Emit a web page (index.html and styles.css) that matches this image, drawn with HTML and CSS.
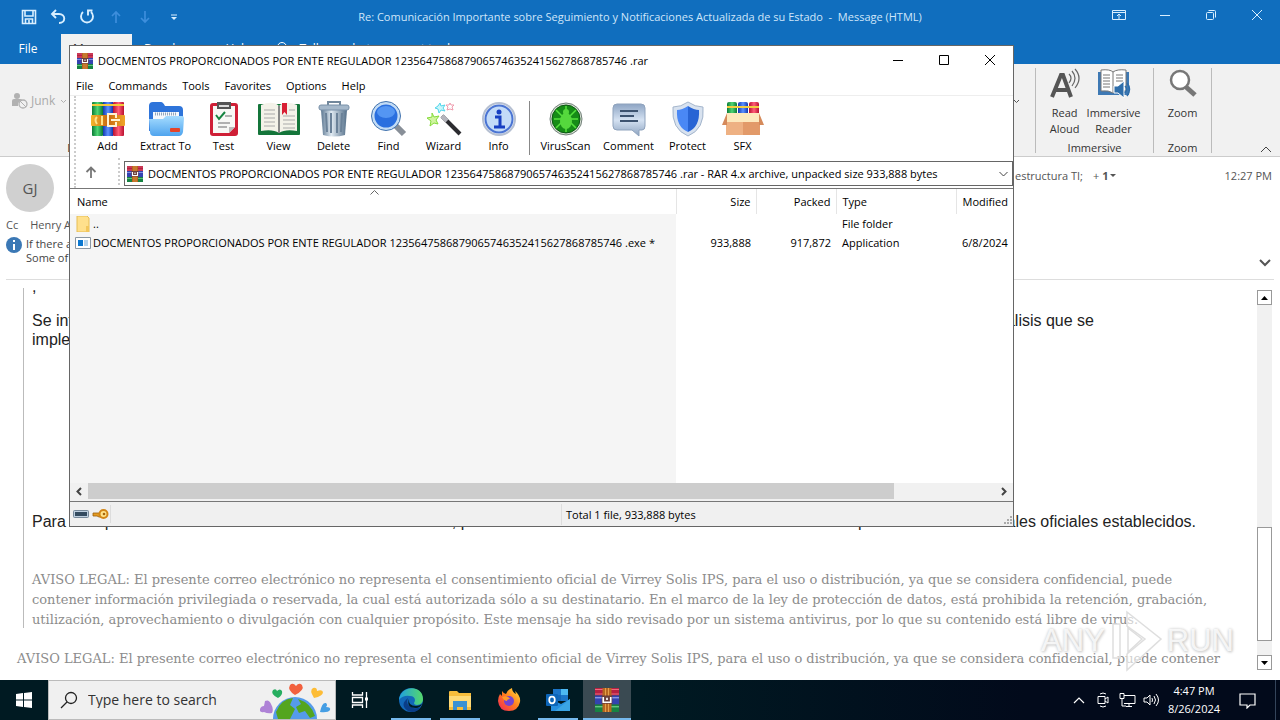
FILE: index.html
```html
<!DOCTYPE html>
<html lang="es">
<head>
<meta charset="utf-8">
<title>Re: Comunicación Importante - Message (HTML)</title>
<link rel="stylesheet" href="styles.css">
</head>
<body>
<svg class="defs" width="0" height="0" aria-hidden="true">
  <defs>
    <linearGradient id="gGold" x1="0" x2="1"><stop offset="0" stop-color="#f5b52d"/><stop offset=".5" stop-color="#c86a10"/><stop offset="1" stop-color="#f0a62a"/></linearGradient>
    <linearGradient id="gRed" x1="0" x2="1"><stop offset="0" stop-color="#b8102f"/><stop offset=".5" stop-color="#ff5d78"/><stop offset="1" stop-color="#b8102f"/></linearGradient>
    <linearGradient id="gBlue" x1="0" x2="1"><stop offset="0" stop-color="#1238b0"/><stop offset=".5" stop-color="#5d92ff"/><stop offset="1" stop-color="#1238b0"/></linearGradient>
    <linearGradient id="gGreen" x1="0" x2="1"><stop offset="0" stop-color="#0a7a35"/><stop offset=".5" stop-color="#4fd675"/><stop offset="1" stop-color="#0a7a35"/></linearGradient>
    <linearGradient id="gSky" x1="0" y1="0" x2="0" y2="1"><stop offset="0" stop-color="#a5dcff"/><stop offset="1" stop-color="#4fa4ee"/></linearGradient>
    <linearGradient id="gSteel" x1="0" x2="1"><stop offset="0" stop-color="#5d7892"/><stop offset=".4" stop-color="#e0eaf2"/><stop offset="1" stop-color="#55708a"/></linearGradient>
    <linearGradient id="gNote" x1="0" y1="0" x2="0" y2="1"><stop offset="0" stop-color="#8ea5c4"/><stop offset=".5" stop-color="#d5e2f2"/><stop offset="1" stop-color="#8da3c0"/></linearGradient>
    <linearGradient id="gEdge" x1="0" y1="0" x2="1" y2="0"><stop offset="0" stop-color="#1fa0e0"/><stop offset="1" stop-color="#55d86a"/></linearGradient>
    <linearGradient id="gFox" x1="1" y1="0" x2="0" y2="1"><stop offset="0" stop-color="#ffe53b"/><stop offset=".5" stop-color="#ff7a1f"/><stop offset="1" stop-color="#f0205a"/></linearGradient>
    <symbol id="books" viewBox="0 0 16 16">
      <rect width="16" height="5" fill="#b52042"/><rect y="5" width="16" height="6" fill="#3343b0"/><rect y="11" width="16" height="5" fill="#168242"/>
      <path d="M0 1h16M0 4h16" stroke="#ee6a7c" stroke-width=".7"/><path d="M0 6.500h16" stroke="#98a4ee" stroke-width=".8"/><path d="M0 12.500h16" stroke="#72cf8b" stroke-width=".8"/>
      <rect x="5" width="6" height="16" fill="#b5651f"/><path d="M7 0v16M9 0v16" stroke="#e6a04a" stroke-width=".7"/>
      <rect x="4.500" y="5" width="7" height="5.500" fill="#6b3f3a"/><path d="M5.500 6v3.500h5V6M8 6.500v1.500" fill="none" stroke="#fff" stroke-width="1.100"/>
    </symbol>
  </defs>
</svg>
<main class="desktop">
  <section class="mail">
    <header class="mail-title">
      <div class="quick">
        <svg width="16" height="16" fill="none" stroke="#d9efff" stroke-width="1.600"><path d="M1.500 1.500h13v13h-13zM4 2v5h8V2M4.500 14v-4h7v4M8 11v3"/></svg>
        <svg width="16" height="16" fill="none" stroke="#d9efff" stroke-width="1.900"><path d="M6 1 2 5l4 4M2 5h7c7 0 7 9 0 9"/></svg>
        <svg width="16" height="16" fill="none" stroke="#d9efff" stroke-width="1.900"><path d="M4 3a6 6 0 1 0 8 0M13.500 1.500H9V6.500"/></svg>
        <svg width="16" height="16" fill="none" stroke="#3d8edc" stroke-width="1.700"><path d="M8 14V3M4 7l4-4 4 4"/></svg>
        <svg width="16" height="16" fill="none" stroke="#3d8edc" stroke-width="1.700"><path d="M8 2v11M4 9l4 4 4-4"/></svg>
        <svg width="16" height="16"><path d="M5 6h6" stroke="#d9efff"/><path d="M5 8h6l-3 3z" fill="#d9efff"/></svg>
      </div>
      <h1>Re: Comunicación Importante sobre Seguimiento y Notificaciones Actualizada de su Estado&nbsp; -&nbsp; Message (HTML)</h1>
      <div class="win-controls">
        <button aria-label="Ribbon options"><svg width="14" height="12" fill="none" stroke="#d9efff"><path d="M.5 1.500h13v9H.5zM1 3.500h12M7 10V5M5 7l2-2 2 2"/></svg></button>
        <button aria-label="Minimize"><svg width="12" height="12" stroke="#d9efff"><path d="M1 6.500h10"/></svg></button>
        <button aria-label="Restore"><svg width="12" height="12" fill="none" stroke="#d9efff"><rect x="1.500" y="3.500" width="7" height="7" rx="1"/><path d="M3.500 1.500h6a1 1 0 0 1 1 1v6"/></svg></button>
        <button aria-label="Close"><svg width="12" height="12" stroke="#d9efff"><path d="m1 1 10 10M11 1 1 11"/></svg></button>
      </div>
    </header>
    <nav class="tabs">
      <button>File</button><button class="on">Message</button><button>Developer</button><button>Help</button>
      <button class="tell"><svg width="14" height="14" fill="none" stroke="#fff"><circle cx="7" cy="5" r="4.500"/><path d="m4 9-3 4"/></svg>Tell me what you want to do</button>
    </nav>
    <div class="ribbon">
      <button class="junk"><svg width="18" height="18" fill="#b1b1b1"><circle cx="6" cy="4" r="3"/><path d="M1 14V9q0-2 2-2h6q2 0 2 1l-4 3v3z"/><circle cx="12" cy="12" r="4" fill="#f1f1f1" stroke="#b1b1b1" stroke-width="1.300"/><path d="m9 9 6 6" stroke="#b1b1b1"/></svg>Junk<svg width="7" height="5" fill="none" stroke="#b1b1b1"><path d="m1 1 2.500 2.500L6 1"/></svg></button>
      <span class="del">Delete</span>
      <div class="groups">
        <svg class="more" width="7" height="5" fill="none" stroke="#555"><path d="m1 1 2.500 2.500L6 1"/></svg>
        <div class="group immersive">
          <div class="tools">
            <button><svg width="32" height="32" fill="none" stroke="#666"><path d="M3 29 12 7h2l8 22M7 22h11" stroke="#555" stroke-width="4"/><path d="M20 6q4 4 0 9M23 3q6 7 0 15M26 1q8 9 0 19" stroke-width="1.200"/></svg>Read<br>Aloud</button>
            <button><svg width="34" height="32" fill="none"><path d="M1 4h31v23H1z" fill="#3e79b4"/><path d="M4 2q9-1 12 2 4-3 13-2v21q-9-1-13 2-4-3-12-2z" fill="#fff" stroke="#777"/><path d="M16 4v20M6 7h7M6 10h7M6 13h7M6 16h7M6 19h7M19 7h7M19 10h7M19 13h7" stroke="#777"/><path d="M17 18h4l6-5v17l-6-5h-4z" fill="#2f6eaa" stroke="#fff"/><path d="M28 18q3 3 0 7M30 15q5 6 0 13" stroke="#2f6eaa" stroke-width="1.500"/></svg>Immersive<br>Reader</button>
          </div>
          <span>Immersive</span>
        </div>
        <div class="group zoom">
          <div class="tools"><button><svg width="32" height="32" fill="#fff" stroke="#777"><path d="m19 19 9 8" stroke-width="5"/><circle cx="13" cy="12" r="9" stroke-width="2.500"/></svg>Zoom</button></div>
          <span>Zoom</span>
        </div>
        <div class="tail"><svg width="12" height="7" fill="none" stroke="#444"><path d="m1 6 5-5 5 5"/></svg></div>
      </div>
    </div>
    <div class="msg-head">
      <div class="who">
        <div class="avatar">GJ</div>
        <p class="cc"><span>Cc</span><span>Henry Al</span></p>
        <div class="info"><svg width="16" height="16"><circle cx="8" cy="8" r="8" fill="#3b78b5"/><path d="M8 7v6M8 3v2" stroke="#fff" stroke-width="2"/></svg><p>If there are<br>Some of t</p></div>
      </div>
      <div class="meta">
        <p class="rcpt">estructura TI; <span>+ <b>1</b></span><svg width="6" height="4"><path d="M0 0h6L3 3z" fill="#555"/></svg></p>
        <time>12:27 PM</time>
      </div>
      <svg class="expand" width="12" height="8" fill="none" stroke="#555" stroke-width="2"><path d="m1 1 5 5 5-5"/></svg>
    </div>
    <div class="reading">
      <article>
        <div class="quote">
          <p class="cut">,</p>
          <p class="para split"><span>Se informa<br>implementan</span><span>álisis que se</span></p>
          <p class="para split second"><span>Para cualquier consulta o solicitud de información adicional, puede comunicarse</span><span>por medio de los canales oficiales establecidos.</span></p>
          <p class="legal"><span>AVISO LEGAL: El presente correo electrónico no representa el consentimiento oficial de Virrey Solis IPS, para el uso o distribución, ya que se considera confidencial, puede</span><span>contener información privilegiada o reservada, la cual está autorizada sólo a su destinatario. En el marco de la ley de protección de datos, está prohibida la retención, grabación,</span><span>utilización, aprovechamiento o divulgación con cualquier propósito. Este mensaje ha sido revisado por un sistema antivirus, por lo que su contenido está libre de virus.</span></p>
        </div>
        <p class="legal last"><span>AVISO LEGAL: El presente correo electrónico no representa el consentimiento oficial de Virrey Solis IPS, para el uso o distribución, ya que se considera confidencial, puede contener</span></p>
      </article>
      <div class="vbar"><button aria-label="Scroll up"><svg width="7" height="4"><path d="M0 4h7L3.500 0z"/></svg></button><i></i><button aria-label="Scroll down"><svg width="7" height="4"><path d="M0 0h7L3.500 4z"/></svg></button></div>
      <div class="watermark"><span>ANY</span><svg width="62" height="62" fill="#fff" fill-opacity=".6" stroke="#dedede" stroke-width="1.500"><path d="M8 14h7v34H8zM22 2l34 27-34 31V44l18-15-18-13z"/><path d="M23 18v24l14-13z"/></svg><span>RUN</span></div>
    </div>
  </section>

  <section class="rar">
    <header class="rar-title">
      <svg width="16" height="16"><use href="#books"/></svg>
      <h2>DOCMENTOS PROPORCIONADOS POR ENTE REGULADOR 1235647586879065746352415627868785746 .rar</h2>
      <div class="rar-controls">
        <button aria-label="Minimize"><svg width="12" height="12" stroke="#000"><path d="M1 6.500h10"/></svg></button>
        <button aria-label="Maximize"><svg width="12" height="12" stroke="#000" fill="none"><path d="M1.500 1.500h9v9h-9z"/></svg></button>
        <button aria-label="Close"><svg width="12" height="12" stroke="#000"><path d="m1 1 10 10M11 1 1 11"/></svg></button>
      </div>
    </header>
    <nav class="menu"><button>File</button><button>Commands</button><button>Tools</button><button>Favorites</button><button>Options</button><button>Help</button></nav>
    <div class="bars">
      <div class="toolbar">
        <button><svg width="36" height="36"><rect x="2" y="1" width="11" height="34" rx="1" fill="url(#gGreen)"/><rect x="13" y="1" width="10" height="34" fill="url(#gBlue)"/><rect x="23" y="1" width="11" height="34" rx="1" fill="url(#gRed)"/><path d="M2 4h32" stroke="#f5c839" stroke-width="2"/><rect x="1" y="14" width="34" height="11" rx="1" fill="url(#gGold)"/><path d="M7 16q-3 3 0 7M12 15v9" fill="none" stroke="#ffe48b" stroke-width="2"/><path d="M26 17v-4h-8v12h8v-4M21 19h9" fill="none" stroke="#fff3d4" stroke-width="2"/></svg>Add</button>
        <button class="mid"><svg width="36" height="36"><path d="M1 30V5q0-4 4-4h8q2 0 4 4h14q4 0 4 4v17z" fill="#2e74da"/><path d="M5 11h26v12H5z" fill="#f6f9fd"/><path d="M7 13h22" stroke="#95a7bb" stroke-width="3" stroke-dasharray="1 1"/><path d="M1 18h14l3-3h16q2 0 2 2l-1 14q-1 4-4 4H6q-4 0-4-4z" fill="url(#gSky)"/><rect x="22" y="27" width="10" height="4" rx="1" fill="#e4442a"/></svg>Extract To</button>
        <button><svg width="36" height="36"><rect x="4" y="2" width="28" height="33" rx="3" fill="#cf1f36"/><path d="M7 5h22v21l-6 6H7z" fill="#f8f8f5"/><path d="m29 26-6 6v-6z" fill="#bbb"/><path d="M11 1h14v7H11z" fill="#555"/><path d="M13 5h10" stroke="#ddd" stroke-width="2"/><path d="m10 14 3 4 6-7" fill="none" stroke="#168440" stroke-width="2"/><path d="M19 15h7M12 22h12M12 26h9" stroke="#999" stroke-width="1.500"/></svg>Test</button>
        <button><svg width="42" height="36"><rect y="3" width="42" height="31" rx="1" fill="#14753a"/><path d="M3 4q12-5 18 1 6-6 18-1v26q-12-2-18 2-6-4-18-2z" fill="#f4f2e9"/><path d="M21 5v27" stroke="#888" stroke-width="2"/><path d="M6 9h11M6 13h11M6 17h11M6 21h11M6 25h11M31 9h6M25 15h12M25 19h12M25 23h12M25 27h12" stroke="#aaa"/><path d="M24 2h5v12l-2.500-3-2.500 3z" fill="#d81f34"/></svg>View</button>
        <button><svg width="36" height="36"><path d="M12 4V1h12v3" fill="none" stroke="#71879b" stroke-width="2"/><path d="m5 9 2 25q11 3 22 0l2-25z" fill="url(#gSteel)"/><rect x="3" y="4" width="30" height="5" rx="2" fill="#a5b8ca" stroke="#7890a8"/><path d="m10 12 1 19M15 12v20M21 12v20M26 12l-1 19" stroke="#6b8299" stroke-width="2"/></svg>Delete</button>
        <button><svg width="38" height="36"><path d="m25 24 9 9" stroke="#888f98" stroke-width="6"/><circle cx="16" cy="15" r="13" fill="#2a6fdf" stroke="#c3dcf5" stroke-width="3"/><circle cx="16" cy="15" r="14.500" fill="none" stroke="#4273ae"/><ellipse cx="16" cy="11" rx="9" ry="6" fill="#66a6fb" opacity=".7"/></svg>Find</button>
        <button><svg width="36" height="36"><path d="m16 15 18 18" stroke="#2c2c30" stroke-width="4"/><path d="m16 15 5 5" stroke="#b5b5bd" stroke-width="4"/><path d="m14 2 1 3 4-1-2 3 2 3-4-1-2 3-1-4-3-1 3-2z" fill="#c9f7fc" stroke="#54d5ea"/><path d="m6 12 2 4 5-1-3 4 2 4-4-1-4 3 1-5-4-3 5-1z" fill="#d0f5a0" stroke="#86dc3c"/><path d="m24 2 1 2h3l-2 2 1 3-3-1-3 1 1-3-2-2h3z" fill="#fff" stroke="#ef9bad"/></svg>Wizard</button>
        <button><svg width="36" height="36"><circle cx="18" cy="18" r="16" fill="#eef3fb" stroke="#b6c0d2" stroke-width="2"/><circle cx="18" cy="18" r="13.500" fill="#c3dbf8" stroke="#4a74d3" stroke-width="2"/><circle cx="18" cy="11" r="2.500" fill="#173fc2"/><path d="M14 16h5v9M13 26h11" fill="none" stroke="#173fc2" stroke-width="3"/></svg>Info</button>
        <span class="sep"></span>
        <button class="wide"><svg width="36" height="36"><circle cx="18" cy="18" r="16" fill="#d7dfd3" stroke="#718079"/><circle cx="18" cy="18" r="14" fill="#168c17" stroke="#0a5713"/><path d="m8 9 6 6M28 9l-6 6M6 18h24M8 27l6-6M28 27l-6-6M18 5v26" stroke="#55e43d" stroke-width="1.500"/><ellipse cx="18" cy="20" rx="6" ry="8" fill="#55d83d"/><circle cx="18" cy="11" r="3" fill="#55d83d"/></svg>VirusScan</button>
        <button class="wide"><svg width="36" height="36"><path d="M6 3h24q4 0 4 4v18q0 4-3 4h-3v6l-7-6H6q-4 0-4-4V7q0-4 4-4z" fill="url(#gNote)" stroke="#8fa3bd"/><path d="M9 10h18M9 15h14M9 20h18" stroke="#3d5370" stroke-width="2"/></svg>Comment</button>
        <button><svg width="36" height="36"><path d="M18 1q7 5 15 5 2 22-15 29Q1 28 3 6q8 0 15-5z" fill="#d8e2ef" stroke="#a3b5cc"/><path d="M18 5q6 4 11 4 1 17-11 22z" fill="#2864d4"/><path d="M18 5q-6 4-11 4-1 17 11 22z" fill="#4a88f5"/></svg>Protect</button>
        <button><svg width="42" height="36"><rect x="5" y="1" width="10" height="15" rx="2" fill="url(#gGreen)"/><rect x="16" y="1" width="10" height="15" rx="2" fill="url(#gBlue)"/><rect x="27" y="1" width="10" height="15" rx="2" fill="url(#gRed)"/><path d="M5 6h32" stroke="#f2cc40" stroke-width="2"/><path d="M4 18h34v16H4z" fill="#eeb183"/><path d="M21 18h17v16H21z" fill="#e29a69"/><path d="M5 12h32v9H5z" fill="#fde9bd"/><path d="M5 12 0 24h5zM37 12l5 12h-5z" fill="#d58a5b"/></svg>SFX</button>
      </div>
      <div class="address">
        <button class="up" aria-label="Up one level"><svg width="12" height="12" fill="none" stroke="#777" stroke-width="1.800"><path d="M6 12V2M1.500 6 6 1.500 10.500 6"/></svg></button>
        <div class="path"><svg width="16" height="16"><use href="#books"/></svg><input aria-label="Path" value="DOCMENTOS PROPORCIONADOS POR ENTE REGULADOR 1235647586879065746352415627868785746 .rar - RAR 4.x archive, unpacked size 933,888 bytes"><svg width="9" height="6" fill="none" stroke="#444"><path d="m.5 1 4 4 4-4"/></svg></div>
      </div>
    </div>
    <div class="list">
      <svg class="sort" width="9" height="5" fill="none" stroke="#666"><path d="m.5 4.500 4-4 4 4"/></svg>
      <table>
        <colgroup><col class="c-name"><col class="c-num"><col class="c-num"><col class="c-type"><col class="c-mod"></colgroup>
        <thead><tr><th>Name</th><th class="num">Size</th><th class="num">Packed</th><th>Type</th><th>Modified</th></tr></thead>
        <tbody>
          <tr><td><div class="file"><svg width="16" height="16"><path d="M2 0h10l2 2v14H2z" fill="#ffe08c" stroke="#e6bd55"/><path d="M11 10h3v6h-3z" fill="#f3c75c"/></svg>..</div></td><td></td><td></td><td>File folder</td><td></td></tr>
          <tr><td><div class="file"><svg width="16" height="12"><path d="M.5.5h15v11H.5z" fill="#fff" stroke="#8a97a3"/><path d="M3 3h5v6H3z" fill="#0b78d0"/><path d="M9 4h4M9 6h4M9 8h4" stroke="#6aa7d8"/></svg>DOCMENTOS PROPORCIONADOS POR ENTE REGULADOR 1235647586879065746352415627868785746 .exe *</div></td><td class="num">933,888</td><td class="num">917,872</td><td>Application</td><td>6/8/2024</td></tr>
          <tr class="rest"><td></td><td></td><td></td><td></td><td></td></tr>
        </tbody>
      </table>
      <div class="hbar"><svg width="18" height="9" fill="none" stroke="#444" stroke-width="2"><path d="M11 1 7.500 4.500 11 8"/></svg><i></i><svg width="18" height="9" fill="none" stroke="#444" stroke-width="2"><path d="M7 1l3.500 3.500L7 8"/></svg></div>
    </div>
    <footer class="status">
      <div class="icons"><svg width="16" height="9"><rect x=".5" y=".5" width="15" height="7" rx="1" fill="#becfdf" stroke="#77899a"/><path d="M2 4h12" stroke="#344b60" stroke-width="4"/></svg><svg width="17" height="10" viewBox="0 1 17 10"><path d="M1 5h8v4H7L5 8 1 8z" fill="#e49b21" stroke="#9b5d0d" stroke-width=".8"/><circle cx="11.500" cy="6" r="4" fill="#ffe38a" stroke="#d28617" stroke-width="2"/><circle cx="12" cy="6" r="1.300" fill="#a7650e"/></svg></div>
      <span class="total">Total 1 file, 933,888 bytes</span>
      <svg class="grip" width="10" height="10" fill="#aaa"><path d="M7 0h2v2H7zM7 3h2v2H7zM7 6h2v2H7zM4 3h2v2H4zM4 6h2v2H4zM1 6h2v2H1z"/></svg>
    </footer>
  </section>

  <footer class="taskbar">
    <button class="start" aria-label="Start"><svg width="16" height="16" fill="#fff"><path d="m0 2 7-1v6.500H0zM8 1l8-1v7.500H8zM0 8.500h7V15l-7-1zM8 8.500h8V16l-8-1z"/></svg></button>
    <label class="search">
      <svg width="18" height="18" fill="none" stroke="#222" stroke-width="1.300"><circle cx="11" cy="7" r="5.500"/><path d="m7 11-6 6"/></svg>
      <input placeholder="Type here to search" aria-label="Search">
      <svg width="72" height="38"><path d="M13 38a22 22 0 0 1 44 0z" fill="#559bea"/><path d="M16 31q5-13 17-14l-3 7 5 4-5 10H18zM38 18q13 4 17 17l-5 2-5-7-6 2-3-6 5-3z" fill="#54a51f"/><path d="M5 20q4-2 6 3 3 5 1 9-4 1-8-1-5 1-4-3 1-3 4-3z" fill="#ae82d6"/><path d="M18 17q-8-4-5-8 3-2 4 1 3-3 5 0 1 4-4 7z" fill="#27ae60"/><path d="M35 14Q27 9 30 4q3-3 6 1 3-4 6-1 3 5-7 10z" fill="#f2603e"/><path d="M54 17q-5-8-1-10 4-1 4 3 5-2 6 1 0 4-9 6z" fill="#fdbc35"/><path d="M60 31q2-10 6-9 2 2 0 4 5 0 4 3-2 3-10 2z" fill="#459ee4"/></svg>
    </label>
    <div class="apps">
      <button aria-label="Task view"><svg width="18" height="18" fill="none" stroke="#fff" stroke-width="1.300"><path d="M1.500 1v3h10V1M1.500 17v-3h10v3M1.500 6.500h10v5h-10zM15.500 1v16"/><path d="M14 8h3" stroke-width="3"/></svg></button>
      <button class="open" aria-label="Edge"><svg width="24" height="24"><circle cx="12" cy="12" r="12" fill="#1268b8"/><path d="M0 12C1-3 24-4 24 11c0 7-9 7-9 4 2-3 1-7-4-7Q4 7 0 12z" fill="url(#gEdge)"/><path d="M9 10q-3 7 5 10 4 1 8-1-5 7-13 4-9-6 0-13z" fill="#0a3d87"/><path d="M10 11q-1 7 7 7 3 0 6-2-2 4-6 4-10 0-7-9z" fill="#001a22"/></svg></button>
      <button class="open" aria-label="File Explorer"><svg width="24" height="24"><path d="M1 4q0-1 1-1h7l2 2h12v17H1z" fill="#f7bd3c"/><path d="M1 8h22v11H1z" fill="#ffda77"/><path d="M5 13h14v9h-4v-3H9v3H5z" fill="#3a91d4"/></svg></button>
      <button aria-label="Firefox"><svg width="24" height="24"><path d="M5 3q2 3 4 3 1-4 6-6 0 4 4 6l-1-3q6 5 5 11-2 9-11 9Q2 23 1 13q0-4 2-7l2 2z" fill="url(#gFox)"/><circle cx="12" cy="13" r="5" fill="#7444cf"/><path d="M5 9q6-2 8 2-3 0-3 2-3 0-5-4z" fill="#ff9928"/></svg></button>
      <button class="open" aria-label="Outlook"><svg width="24" height="24"><path d="M7 1h15v12H7z" fill="#1b75c9"/><path d="M15 1h7v6h-7z" fill="#4db9f2"/><path d="M7 7h8v6H7z" fill="#1267b8"/><path d="M5 11l10 5 9-5v12H5z" fill="#268fdf"/><path d="m24 11-15 12h15z" fill="#3ba5e5"/><rect y="6" width="12" height="12" rx="1" fill="#0c65b8"/><ellipse cx="6" cy="12" rx="2.800" ry="3.300" fill="none" stroke="#fff" stroke-width="1.700"/></svg></button>
      <button class="open active" aria-label="WinRAR"><svg width="24" height="24"><use href="#books"/></svg></button>
    </div>
    <div class="tray">
      <svg width="12" height="8" fill="none" stroke="#fff" stroke-width="1.200"><path d="m1 7 5-5 5 5"/></svg>
      <svg width="12" height="16" fill="none" stroke="#fff"><path d="M1 4.500h7v7H1zM8 7l3-2v6L8 9M3 2q3-2 6 0M3 14q3 2 6 0"/></svg>
      <svg width="17" height="14" fill="none" stroke="#fff"><path d="M5 2.500h11v8H5M7 13.500h6M10 11v3M1 .5h4v5H1zM3 6v7h4"/></svg>
      <svg width="17" height="14" fill="none" stroke="#fff"><path d="M1 5v4h3l3 3V2L4 5zM9 5q1 2 0 4M11 3q3 4 0 8M13 1q5 6 0 12"/></svg>
      <time>4:47 PM<br>8/26/2024</time>
      <svg width="17" height="17" fill="none" stroke="#fff" stroke-width="1.200"><path d="M1 2h15v11h-5l-3 3v-3H1z"/></svg>
    </div>
  </footer>
</main>
</body>
</html>
```
FILE: styles.css
```css
* { box-sizing: border-box; }
body { margin: 0; font: 12px/16px "Open Sans", "Noto Sans", sans-serif; color: #000; }
h1, h2, p { margin: 0; font-size: inherit; font-weight: 400; }
button, input { font: inherit; color: inherit; border: 0; padding: 0; margin: 0; background: none; }
svg { flex: none; display: block; }
.defs { position: absolute; }
.desktop { position: relative; display: flex; flex-direction: column; height: 100vh; overflow: hidden; }

.mail { flex: 1; min-height: 0; display: flex; flex-direction: column; background: #fff; }
.mail-title { height: 34px; background: #106ebe; color: #cfe6fa; display: grid; grid-template-columns: 1fr auto 1fr; align-items: center; font-size: 11px; }
.mail-title h1 { white-space: nowrap; text-align: center; }
.quick { display: flex; gap: 13px; padding-left: 21px; }
.win-controls { display: flex; justify-content: flex-end; }
.win-controls button { width: 46px; display: grid; place-items: center; padding-bottom: 4px; }
.tabs { height: 30px; background: #106ebe; color: #fff; display: flex; }
.tabs button { padding: 0 12px; }
.tabs button:first-child { padding: 0 5px 0 0; width: 61px; }
.tabs .on { background: #f1f1f1; color: #333; width: 71px; }
.tabs .tell { display: flex; align-items: center; gap: 10px; }
.ribbon { height: 93px; background: #f1f1f1; border-bottom: 1px solid #ccc; display: flex; color: #333; }
.junk { display: flex; align-items: center; align-self: flex-start; gap: 2px; color: #aaa; padding: 28px 0 0 11px; }
.junk svg:last-child { margin-left: 3px; }
.del { align-self: flex-end; font-size: 11px; }
.groups { margin-left: auto; display: flex; padding: 4px 0 3px; }
.more { margin: 31px 15px 0 0; }
.group { border-left: 1px solid #bbb; display: flex; flex-direction: column; align-items: center; justify-content: space-between; font-size: 11px; }
.immersive { width: 118px; }
.zoom { width: 58px; }
.tools { display: flex; gap: 6px; }
.tools button { display: flex; flex-direction: column; align-items: center; gap: 5px; }
.group > span { line-height: 10px; }
.tail { width: 69px; border-left: 1px solid #bbb; display: flex; align-items: flex-end; justify-content: flex-end; padding-right: 8px; }
.msg-head { height: 123px; margin: 0 6px; border-bottom: 1px solid #ddd; display: flex; justify-content: space-between; position: relative; color: #555; }
.who { padding-top: 7px; font-size: 11px; }
.avatar { width: 48px; height: 48px; border-radius: 50%; background: #d0d0d0; display: grid; place-items: center; font-size: 15px; color: #555; }
.cc { display: flex; gap: 12px; padding: 5px 0 4px; }
.info { display: flex; gap: 4px; line-height: 14px; color: #444; }
.meta { width: 259px; display: flex; align-items: flex-start; justify-content: space-between; padding: 11px 2px 0 0; font-size: 11px; }
.rcpt { display: flex; align-items: center; }
.rcpt span { margin: 0 2px 0 10px; }
.expand { position: absolute; right: 3px; bottom: 12px; }
.reading { flex: 1; min-height: 0; display: flex; justify-content: space-between; padding-top: 8px; position: relative; overflow: hidden; }
article { flex: 1; min-width: 0; padding-left: 17px; color: #222; font: 16px/19px "Liberation Sans", Arial, sans-serif; }
.quote { border-left: 1px solid #bbb; margin-left: 6px; padding-left: 8px; height: 340px; }
.cut { height: 5px; display: flex; align-items: flex-end; line-height: 12px; }
.para { padding-top: 18px; }
.split { display: flex; justify-content: space-between; padding-right: 163px; white-space: nowrap; }
.second { padding-top: 163px; padding-right: 61px; }
.legal { font: 13px/20px "DejaVu Serif", serif; color: #8c8c8c; padding-top: 39px; white-space: nowrap; }
.legal span { display: block; }
.last { padding-top: 21px; }
.vbar { width: 15px; margin: 2px 8px 10px 0; background: #f1f1f1; display: flex; flex-direction: column; }
.vbar button { height: 15px; border: 1px solid #999; background: #fff; display: grid; place-items: center; }
.vbar i { height: 114px; margin: auto 0 14px; border: 1px solid #999; background: #fff; }
.watermark { position: absolute; right: 46px; bottom: 8px; display: flex; align-items: center; color: rgba(255,255,255,.8); font: 31px/40px "Liberation Sans", sans-serif; text-shadow: 0 0 3px #ccc, 1px 1px 3px #ccc; }

.rar { position: absolute; left: 69px; top: 45px; width: 945px; height: 482px; border: 1px solid #666; background: #fff; display: flex; flex-direction: column; }
.rar-title { height: 30px; display: flex; align-items: center; gap: 5px; padding-left: 7px; white-space: nowrap; font-size: 11px; }
.rar-controls { margin-left: auto; display: flex; }
.rar-controls button { width: 46px; display: grid; place-items: center; padding-bottom: 2px; }
.menu { height: 20px; border-bottom: 1px solid #eee; display: flex; gap: 15px; padding-left: 6px; }
.menu button { line-height: 18px; font-size: 11px; }
.bars { margin-left: 4px; border-left: 2px dotted #ccc; }
.toolbar { height: 62px; display: flex; padding: 5px 0 0 4px; }
.toolbar button { width: 55px; display: flex; flex-direction: column; align-items: center; gap: 1px; font-size: 11px; }
.toolbar .mid { width: 61px; }
.toolbar .wide { width: 63px; }
.sep { width: 1px; height: 54px; margin: 0 4px 0 3px; background: #888; }
.address { height: 30px; display: flex; padding-bottom: 3px; }
.up { width: 44px; border-right: 2px dotted #ccc; display: grid; place-items: center; padding-right: 12px; }
.path { flex: 1; min-width: 0; height: 25px; margin: 3px 0 0 4px; border: 1px solid #666; display: flex; align-items: center; gap: 5px; padding: 0 4px 0 2px; }
.path input { flex: 1; min-width: 0; font-size: 11px; }
.list { flex: 1; min-height: 0; position: relative; border-top: 1px solid #777; border-bottom: 1px solid #777; display: flex; flex-direction: column; }
.sort { position: absolute; left: 300px; top: 1px; }
table { flex: 1; width: 100%; height: 295px; table-layout: fixed; border-collapse: collapse; font-size: 11px; white-space: nowrap; }
.c-num { width: 80px; }
.c-type { width: 120px; }
.c-mod { width: 57px; }
th { height: 25px; padding: 1px 6px 0; font-weight: 400; text-align: left; border-right: 1px solid #e5e5e5; }
th:first-child { padding-left: 7px; }
td { height: 19px; padding: 0 6px; overflow: hidden; }
th:last-child { border: 0; padding-right: 0; }
td:last-child { padding-right: 0; }
.num { text-align: right; padding-right: 5px; }
td:first-child { background: #f5f5f5; padding-left: 5px; }
.rest td { height: auto; }
.file { display: flex; align-items: center; gap: 2px; }
.hbar { height: 18px; flex: none; background: #f1f1f1; display: flex; align-items: center; justify-content: space-between; padding-bottom: 2px; }
.hbar i { flex: 1; height: 16px; margin-right: 101px; background: #cdcdcd; }
.status { height: 24px; background: #f0f0f0; display: flex; font-size: 11px; position: relative; }
.icons { width: 41px; margin: 3px 0; border-right: 1px solid #ddd; display: flex; align-items: center; gap: 3px; padding-left: 3px; }
.total { margin: 2px 0 1px auto; flex: 0 0 452px; border-left: 1px solid #ddd; padding: 3px 4px; }
.grip { position: absolute; right: 0; bottom: 0; }

.taskbar { height: 40px; flex: none; display: flex; background: linear-gradient(90deg, #001a22 0, #001a22 50%, #020a1b 80%); color: #fff; }
.start { width: 48px; display: grid; place-items: center; }
.search { width: 288px; background: #f0f0f0; border: 1px solid #bbb; display: flex; align-items: center; color: #222; padding: 0 3px 0 11px; font-size: 14px; }
.search input { flex: 1; min-width: 0; padding-left: 10px; }
.search input::placeholder { color: #333; opacity: 1; }
.search svg:last-child { align-self: flex-end; }
.apps { display: flex; gap: 1px; }
.apps button { width: 48px; display: grid; place-items: center; position: relative; }
.apps button:first-child { margin-right: 2px; }
.apps .open::after { content: ""; position: absolute; left: 4px; right: 4px; bottom: 0; height: 2px; background: #76b9ed; }
.apps .active { background: #3a4a52; }
.apps .active::after { left: 0; right: 0; }
.tray { margin: 0 4px 0 auto; display: grid; grid-template-columns: repeat(4, 24px) 62px 44px; place-items: center; padding-right: 6px; border-right: 1px solid #34445a; font-size: 11px; }
.tray time { text-align: center; line-height: 18px; white-space: nowrap; }
```
